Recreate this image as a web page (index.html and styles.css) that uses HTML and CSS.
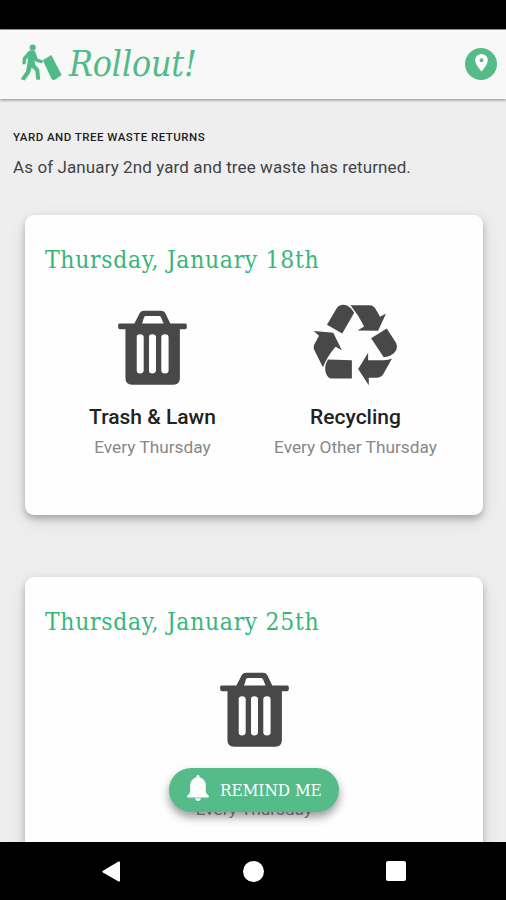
FILE: index.html
```html
<!DOCTYPE html>
<html lang="en">
<head>
<meta charset="utf-8">
<title>Rollout!</title>
<link rel="stylesheet" href="styles.css">
</head>
<body>
<svg class="defs" aria-hidden="true">
  <symbol id="trash" viewBox="54 58 207 226">
    <path fill-rule="evenodd" d="M57 99H103L118 69Q122 60 132 60H183Q193 60 197 69L211 99H257Q261 99 261 106V110Q261 116 255 116H240V264Q240 283 220 283H96Q76 283 76 264V116H60Q54 116 54 110V105Q54 99 57 99ZM126 99H191L183 80Q181 76 177 76H138Q134 76 132 80ZM110 140V240Q110 249 120 249T131 240V140Q131 131 120 131T110 140ZM147 140V240Q147 249 157 249T168 240V140Q168 131 157 131T147 140ZM184 140V240Q184 249 195 249T206 240V140Q206 131 195 131T184 140Z"/>
  </symbol>
  <symbol id="recycle" viewBox="40 42 256 246">
    <path d="M82 104L111 55Q118 44 131 44Q151 45 164 68L128 130Z"/>
    <path d="M153 45H211Q223 46 229 57L242 80L260 70L236 122L174 121L194 109Q178 76 153 45Z"/>
    <path d="M215 145L262 115L290 158Q296 169 291 180Q280 199 253 202Z"/>
    <path d="M278 206L251 254Q245 263 232 264H208V286L176 237L206 188V211H253Q268 211 278 206Z"/>
    <path d="M157 211V266H99Q87 266 81 255Q70 234 85 209Z"/>
    <path d="M42 123L101 128L127 181L108 170Q82 200 70 232L45 182Q39 172 45 161L58 137Z"/>
  </symbol>
</svg>
<div class="screen">
  <div class="statusbar"></div>
  <header class="header">
    <div class="brand">
      <svg class="walker" viewBox="58 70 132 112">
        <circle cx="97" cy="80" r="9.5"/>
        <path d="M85 91Q95 86 104 91L112 114L128 120L126 129L106 123L103 118L104 132L117 147L120 179H108L105 152L94 141L88 160L72 181L60 177L76 154L81 129L82 111L77 117L75 131H65L67 111Z"/>
        <path d="M128 119L154 103L186 164L164 180Q155 181 153 173Z"/>
      </svg>
      <h1 class="logo">Rollout!</h1>
    </div>
    <div class="location">
      <svg viewBox="0 0 13 18"><path fill-rule="evenodd" d="M6.5 0A6.3 6.3 0 0 0 .2 6.3C.2 10.8 6.5 17.5 6.5 17.5S12.8 10.8 12.8 6.3A6.3 6.3 0 0 0 6.5 0ZM6.5 4.2A2 2 0 1 1 6.5 8.2A2 2 0 0 1 6.5 4.2Z"/></svg>
    </div>
  </header>
  <main class="content">
    <section class="notice">
      <h2>YARD AND TREE WASTE RETURNS</h2>
      <p>As of January 2nd yard and tree waste has returned.</p>
    </section>
    <section class="card">
      <h2 class="date">Thursday, January 18th</h2>
      <div class="pickups">
        <div class="pickup">
          <div class="icon"><svg class="trash"><use href="#trash"/></svg></div>
          <h3>Trash &amp; Lawn</h3>
          <p>Every Thursday</p>
        </div>
        <div class="pickup">
          <div class="icon"><svg class="recycle"><use href="#recycle"/></svg></div>
          <h3>Recycling</h3>
          <p>Every Other Thursday</p>
        </div>
      </div>
    </section>
    <section class="card">
      <h2 class="date">Thursday, January 25th</h2>
      <div class="pickups">
        <div class="pickup single">
          <div class="icon"><svg class="trash"><use href="#trash"/></svg></div>
          <p>Every Thursday</p>
        </div>
      </div>
    </section>
    <button class="remind">
      <svg viewBox="0 0 22 26"><path d="M11 0Q12.700 0 12.700 2.200Q18.500 4 18.800 10.500V16.500Q19 19 21.700 20.500V22.500H.3V20.500Q3 19 3.200 16.500V10.500Q3.500 4 9.300 2.200Q9.300 0 11 0ZM8.200 23.300H13.800Q13.500 26 11 26T8.200 23.300Z"/></svg>
      <span>REMIND ME</span>
    </button>
  </main>
  <nav class="navbar">
    <svg class="back" viewBox="0 0 18 21"><path d="M1 9.700L16.500.6Q18 0 18 1.500V19.500Q18 21 16.500 20.400L1 11.500Q-.4 10.600 1 9.700Z"/></svg>
    <span class="home"></span>
    <span class="recent"></span>
  </nav>
</div>
</body>
</html>
```

FILE: styles.css
```css
* { box-sizing: border-box; }
body { margin: 0; font-family: Roboto, "Liberation Sans", sans-serif; }
h1, h2, h3, p { margin: 0; }
svg { display: block; flex: none; }
.defs { position: absolute; width: 0; height: 0; }
.screen { width: 506px; height: 900px; display: flex; flex-direction: column; overflow: hidden; background: #eee; }
.statusbar { height: 30px; flex: none; background: #000; border-bottom: 1px solid #999; }
.header {
  height: 69px; flex: none; display: flex; align-items: center; justify-content: space-between;
  padding: 0 9px 0 20px; background: #f8f8f8; box-shadow: 0 1px 3px rgba(0,0,0,.45); z-index: 1;
}
.brand { display: flex; align-items: center; gap: 6px; }
.walker { width: 43px; height: 37px; margin-top: -5px; fill: #50bb87; }
.logo {
  font: italic 400 35.5px/44px "DejaVu Serif Condensed", "DejaVu Serif", serif;
  font-stretch: condensed; letter-spacing: -.2px; color: #50bb87; margin-top: -2px;
}
.location {
  width: 32px; height: 32px; margin-top: -1px; border-radius: 50%; background: #55bc89;
  display: flex; align-items: center; justify-content: center;
}
.location svg { width: 13px; height: 18px; margin-top: -2px; fill: #fff; }
.content { position: relative; flex: 1; min-height: 0; overflow: hidden; }
.notice { height: 116px; padding: 28px 13px 0; color: #222; white-space: nowrap; }
.notice h2 { font-size: 11.5px; line-height: 20px; font-weight: 500; letter-spacing: .48px; }
.notice p { margin-top: 8px; font-size: 17px; line-height: 24px; letter-spacing: .1px; color: #444; }
.card {
  width: 458px; height: 300px; margin: 0 0 62px 25px; padding: 27px 20px 0; border-radius: 9px;
  background: #fefefe; box-shadow: 0 4px 7px rgba(0,0,0,.26), 0 6px 22px rgba(0,0,0,.08);
}
.date {
  font: 400 24.5px/36px "DejaVu Serif Condensed", "DejaVu Serif", serif; font-stretch: condensed;
  letter-spacing: .65px; color: #39b57b; white-space: nowrap;
}
.pickups { display: flex; justify-content: center; margin-top: 21px; }
.pickup { width: 203px; text-align: center; white-space: nowrap; }
.icon { height: 88px; display: flex; align-items: center; justify-content: center; }
.trash { width: 69px; height: 75px; margin-top: 9px; fill: #484848; }
.recycle { width: 85px; height: 82px; margin-top: 4px; fill: #484848; }
.pickup h3 { margin-top: 16px; font-size: 21px; line-height: 28px; font-weight: 500; color: #222; }
.pickup p { margin-top: 4px; font-size: 17.3px; line-height: 24px; color: #888; }
.pickup.single p { margin-top: 48px; }
.remind {
  position: absolute; left: 169px; top: 669px; width: 170px; height: 44px; padding: 0 0 0 18px;
  display: flex; align-items: center; gap: 11px; border: 0; border-radius: 22px;
  background: #55bc89; box-shadow: 0 5px 10px rgba(0,0,0,.4); color: #fff;
  font: 400 17px/24px "DejaVu Serif Condensed", "DejaVu Serif", serif; font-stretch: condensed;
  letter-spacing: 0; white-space: nowrap;
}
.remind svg { width: 22px; height: 26px; margin-top: -4px; fill: #fff; }
.navbar { height: 58px; flex: none; display: flex; align-items: center; padding-left: 102px; background: #000; }
.back { width: 18px; height: 21px; fill: #fff; }
.home { width: 21px; height: 21px; margin-left: 123px; border-radius: 50%; background: #fff; }
.recent { width: 20px; height: 20px; margin-left: 122px; border-radius: 2px; background: #fff; }
```
